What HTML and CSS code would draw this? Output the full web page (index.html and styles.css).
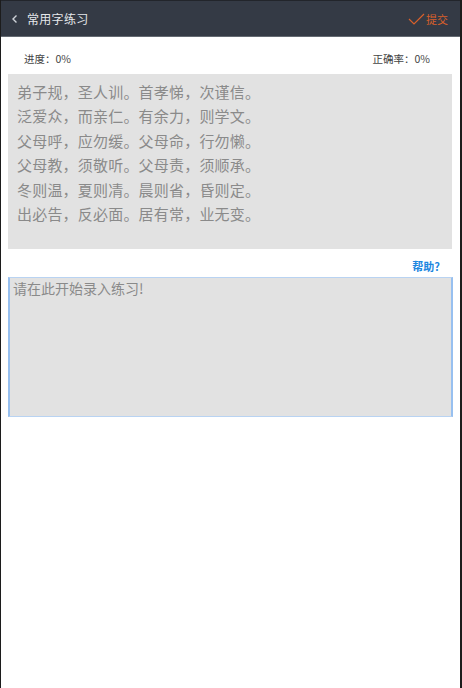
FILE: index.html
```html
<!DOCTYPE html>
<html lang="zh">
<head>
<meta charset="utf-8">
<title>常用字练习</title>
<link rel="stylesheet" href="styles.css">
</head>
<body>
<div class="frame">
  <header class="topbar">
    <div class="back">
      <svg class="back-icon" width="8" height="10" viewBox="0 0 8 10"><path d="M5.5 1.5 L2 5 L5.5 8.5" fill="none" stroke="#cfd3d9" stroke-width="1.4"/></svg>
      <span class="title">常用字练习</span>
    </div>
    <div class="submit">
      <svg class="check" width="17" height="12" viewBox="0 0 17 12"><path d="M1 6 L6 11 L16 1" fill="none" stroke="#d9602b" stroke-width="1.2"/></svg>
      <span>提交</span>
    </div>
  </header>
  <div class="stats">
    <span>进度：0%</span>
    <span>正确率：0%</span>
  </div>
  <div class="source">
    <p>弟子规，圣人训。首孝悌，次谨信。</p>
    <p>泛爱众，而亲仁。有余力，则学文。</p>
    <p>父母呼，应勿缓。父母命，行勿懒。</p>
    <p>父母教，须敬听。父母责，须顺承。</p>
    <p>冬则温，夏则凊。晨则省，昏则定。</p>
    <p>出必告，反必面。居有常，业无变。</p>
  </div>
  <div class="help-row"><a class="help">帮助?</a></div>
  <textarea class="input" placeholder="请在此开始录入练习!"></textarea>
</div>
</body>
</html>
```
FILE: styles.css
```css
html, body {
  margin: 0;
  padding: 0;
  background: #ffffff;
}
body {
  font-family: "Noto Sans CJK SC", "Noto Sans", sans-serif;
}
.frame {
  box-sizing: border-box;
  width: 462px;
  height: 688px;
  border-left: 1px solid #1c1c1c;
  border-right: 2px solid #1c1c1c;
  display: flex;
  flex-direction: column;
}
.topbar {
  height: 35px;
  background: #343a45;
  border-top: 1px solid #22252b;
  border-bottom: 1px solid #646a72;
  display: flex;
  align-items: center;
  justify-content: space-between;
  padding: 0 12px 0 10px;
  flex: none;
}
.back {
  display: flex;
  align-items: center;
  gap: 8px;
}
.title {
  color: #e6e8eb;
  font-size: 12px;
  letter-spacing: 0.3px;
}
.submit {
  display: flex;
  align-items: center;
  gap: 1px;
  color: #d9602b;
  font-size: 11px;
}
.stats {
  display: flex;
  justify-content: space-between;
  padding: 15px 30px 0 23px;
  height: 22px;
  font-size: 10.5px;
  color: #444;
  line-height: 14px;
  flex: none;
}
.source {
  margin: 0 8px 0 7px;
  background: #e2e2e2;
  height: 175px;
  box-sizing: border-box;
  padding: 6px 0 0 9px;
  flex: none;
}
.source p {
  margin: 0;
  font-size: 15px;
  line-height: 24.4px;
  color: #8a8a8a;
  letter-spacing: 0.2px;
}
.help-row {
  display: flex;
  justify-content: flex-end;
  padding: 10px 20px 0 0;
  height: 18px;
  flex: none;
}
.help {
  color: #1d87e0;
  font-size: 11px;
  font-weight: bold;
  line-height: 14px;
}
.input {
  margin: 0 7px 0 7px;
  height: 140px;
  box-sizing: border-box;
  background: #e2e2e2;
  border: 1px solid #b9d3f2;
  border-left: 2px solid #97c0f0;
  border-right: 2px solid #97c0f0;
  padding: 0 3px;
  font-family: "Noto Sans CJK SC", sans-serif;
  font-size: 14px;
  resize: none;
  outline: none;
  flex: none;
}
.input::placeholder {
  color: #8a8a8a;
}
```
